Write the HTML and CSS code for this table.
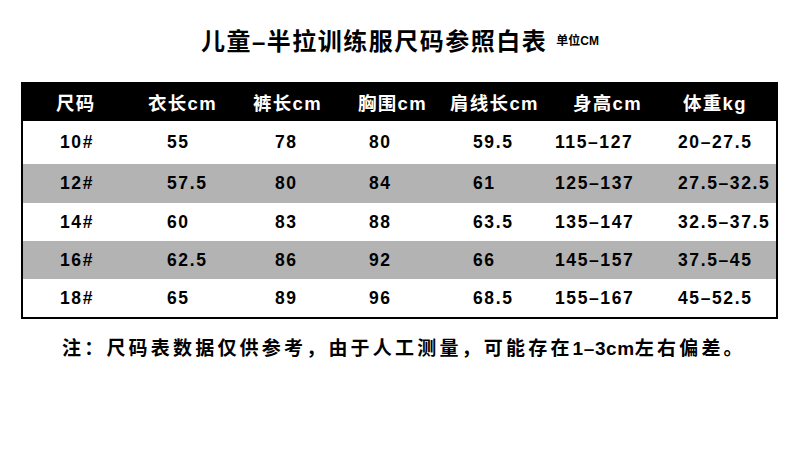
FILE: index.html
```html
<!DOCTYPE html>
<html lang="zh-CN">
<head>
<meta charset="utf-8">
<title>儿童-半拉训练服尺码参照白表</title>
<link rel="stylesheet" href="styles.css">
</head>
<body>
<div class="page">
  <h1 class="title">儿童–半拉训练服尺码参照白表<span class="unit">单位CM</span></h1>
  <div class="table">
    <div class="head">
      <span>尺码</span><span>衣长cm</span><span>裤长cm</span><span>胸围cm</span><span>肩线长cm</span><span>身高cm</span><span>体重kg</span>
    </div>
    <div class="row tall">
      <span>10#</span><span>55</span><span>78</span><span>80</span><span>59.5</span><span>115–127</span><span>20–27.5</span>
    </div>
    <div class="row gray mid">
      <span>12#</span><span>57.5</span><span>80</span><span>84</span><span>61</span><span>125–137</span><span>27.5–32.5</span>
    </div>
    <div class="row">
      <span>14#</span><span>60</span><span>83</span><span>88</span><span>63.5</span><span>135–147</span><span>32.5–37.5</span>
    </div>
    <div class="row gray">
      <span>16#</span><span>62.5</span><span>86</span><span>92</span><span>66</span><span>145–157</span><span>37.5–45</span>
    </div>
    <div class="row">
      <span>18#</span><span>65</span><span>89</span><span>96</span><span>68.5</span><span>155–167</span><span>45–52.5</span>
    </div>
  </div>
  <p class="note">注：尺码表数据仅供参考，由于人工测量，可能存在<span class="latin">1–3cm</span>左右偏差。</p>
</div>
</body>
</html>
```

FILE: styles.css
```css
html, body {
  margin: 0;
  background: #fff;
}

body {
  font-family: "Liberation Sans", "Noto Sans CJK SC", sans-serif;
  font-weight: bold;
  color: #000;
}

.page {
  width: 800px;
  height: 452px;
  overflow: hidden;
}

.title {
  margin: 0;
  padding-top: 26px;
  text-align: center;
  font-size: 24px;
  line-height: 30px;
  letter-spacing: 1.5px;
  font-weight: bold;
}

.unit {
  font-size: 12px;
  letter-spacing: 0;
  margin-left: 9px;
  vertical-align: 5px;
}

.table {
  margin: 25px 0 0 21px;
  width: 757px;
  box-sizing: border-box;
  border: 2px solid #000;
  border-top: 0;
}

.head {
  display: grid;
  grid-template-columns: 92px 105px 105px 92px 123px 110px 1fr;
  padding-left: 33px;
  height: 39px;
  align-items: center;
  background: #000;
  color: #fff;
  font-size: 18.5px;
  letter-spacing: 1.3px;
  white-space: nowrap;
}

.row {
  display: grid;
  grid-template-columns: 107px 108px 94px 104px 82px 123px 1fr;
  padding-left: 37px;
  height: 38px;
  align-items: center;
  font-size: 17.5px;
  letter-spacing: 1.6px;
  white-space: nowrap;
}

.row.tall {
  height: 43px;
}

.row.mid {
  height: 39px;
}

.row.gray {
  background: #b3b3b3;
}

.note {
  margin: 17px 0 0;
  padding-left: 62px;
  font-size: 19px;
  line-height: 26px;
  letter-spacing: 3.2px;
  white-space: nowrap;
}

.note .latin {
  letter-spacing: 0.6px;
}
```
